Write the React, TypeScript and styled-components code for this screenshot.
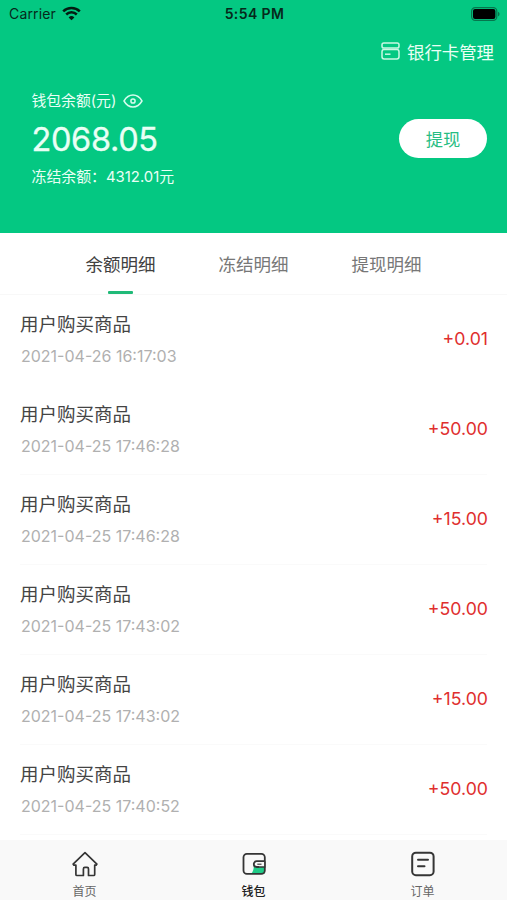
import React from 'react';
import styled, { createGlobalStyle } from 'styled-components';

const GlobalStyle = createGlobalStyle`
  * { box-sizing: border-box; }
  body { margin: 0; background: #fff; font-family: Inter, "Noto Sans CJK SC", sans-serif; }
  button { font-family: inherit; border: 0; padding: 0; background: none; }
`;

const Screen = styled.div`
  width: 507px;
  height: 900px;
  display: flex;
  flex-direction: column;
  overflow: hidden;
  background: #fff;
`;
const Hero = styled.header`
  height: 233px;
  flex: none;
  background: #04c882;
  color: #e9fff5;
`;
const StatusBar = styled.div`
  height: 27px;
  display: grid;
  grid-template-columns: 1fr auto 1fr;
  align-items: center;
  padding: 0 7px 0 9px;
  color: #06281b;
`;
const Carrier = styled.span`
  display: flex;
  align-items: center;
  gap: 6px;
  font-size: 14px;
  letter-spacing: 0.15px;
`;
const Clock = styled.span`
  font-size: 14px;
  font-weight: 600;
  letter-spacing: 0.4px;
`;
const BatteryIcon = styled.svg`
  justify-self: end;
`;
const CardLink = styled.div`
  height: 48px;
  display: flex;
  align-items: center;
  justify-content: flex-end;
  gap: 7px;
  padding-right: 13px;
  font-size: 17.4px;
`;
const Balance = styled.section`
  display: flex;
  align-items: center;
  justify-content: space-between;
  padding: 0 20px 0 31.5px;
  height: 128px;
`;
const BalanceLabel = styled.div`
  display: flex;
  align-items: center;
  gap: 7px;
  height: 24px;
  font-size: 14.8px;
  line-height: 22px;
`;
const Amount = styled.div`
  height: 52px;
  line-height: 54px;
  font-size: 32.5px;
  font-weight: 400;
  -webkit-text-stroke: 0.3px currentColor;
  letter-spacing: -0.35px;
`;
const Frozen = styled.div`
  height: 24px;
  line-height: 24px;
  font-size: 14.9px;
`;
const Withdraw = styled.button`
  width: 88px;
  height: 39px;
  margin-bottom: 1px;
  border-radius: 20px;
  background: #fff;
  color: #27bd83;
  font-size: 17.3px;
`;
const Tabs = styled.nav`
  height: 62px;
  flex: none;
  display: flex;
  justify-content: center;
  border-bottom: 1px solid #f8f8f8;
`;
const Tab = styled.button<{ $active?: boolean }>`
  width: 133px;
  height: 61px;
  display: flex;
  flex-direction: column;
  align-items: center;
  color: ${(p) => (p.$active ? '#404040' : '#777')};
  font-size: 17.5px;
  line-height: 52px;
  padding-top: 6px;
  &::after {
    content: '';
    width: 25px;
    height: 3px;
    border-radius: 1px;
    background: ${(p) => (p.$active ? '#20ba78' : 'transparent')};
  }
`;
const List = styled.main`
  flex: 1;
  padding: 0 20px;
`;
const Row = styled.article<{ $line: boolean }>`
  height: 90px;
  display: flex;
  align-items: center;
  justify-content: space-between;
  border-bottom: 1px solid ${(p) => (p.$line ? '#fafafa' : 'transparent')};
`;
const RowTitle = styled.div`
  height: 32px;
  line-height: 32px;
  font-size: 18.5px;
  color: #444;
`;
const RowTime = styled.div`
  height: 32px;
  line-height: 32px;
  padding-left: 1px;
  font-size: 16px;
  color: #b0b0b0;
`;
const RowAmount = styled.div`
  font-size: 17.7px;
  color: #e02e2e;
  padding-bottom: 2px;
  margin-right: -1px;
`;
const TabBar = styled.footer`
  height: 60px;
  flex: none;
  display: grid;
  grid-template-columns: repeat(3, 1fr);
  background: #f9f9f9;
`;
const NavItem = styled.div<{ $active?: boolean }>`
  display: flex;
  flex-direction: column;
  align-items: center;
  padding-top: 11px;
  gap: 4px;
  font-size: 12px;
  line-height: 21px;
  font-weight: ${(p) => (p.$active ? 500 : 400)};
  color: ${(p) => (p.$active ? '#222' : '#666')};
`;

const records = [
  { time: '2021-04-26 16:17:03', amount: '+0.01' },
  { time: '2021-04-25 17:46:28', amount: '+50.00' },
  { time: '2021-04-25 17:46:28', amount: '+15.00' },
  { time: '2021-04-25 17:43:02', amount: '+50.00' },
  { time: '2021-04-25 17:43:02', amount: '+15.00' },
  { time: '2021-04-25 17:40:52', amount: '+50.00' },
];

const Wifi = () => (
  <svg width="19" height="15" viewBox="0 0 19 15" fill="none" stroke="#031c12" strokeWidth="2.5">
    <path d="M1.2 5.4a11.8 11.8 0 0 1 16.6 0" />
    <path d="M4.2 8.5a7.5 7.5 0 0 1 10.6 0" />
    <path d="M9.5 14.3 6.6 11.4a4.1 4.1 0 0 1 5.8 0z" fill="#031c12" stroke="none" />
  </svg>
);
const Battery = () => (
  <BatteryIcon width="29" height="14" viewBox="0 0 29 14">
    <rect x=".6" y=".6" width="25.2" height="12.8" rx="3.6" fill="none" stroke="#06764d" strokeWidth="1.2" />
    <rect x="2" y="2" width="22.4" height="10" rx="2" fill="#000" />
    <path d="M27 4.7c2 .8 2 3.8 0 4.6z" fill="#06764d" />
  </BatteryIcon>
);
const CardIcon = () => (
  <svg width="19" height="18" viewBox="0 0 19 18" fill="none" stroke="#c9f8e4" strokeWidth="1.5">
    <rect x="1" y="1" width="17" height="5" rx="1.8" />
    <rect x="1" y="7.6" width="17" height="9.4" rx="2.2" />
    <path d="M4 12.2h5.5" />
  </svg>
);
const Eye = () => (
  <svg width="20" height="14" viewBox="0 0 20 14" fill="none" stroke="#d6fced" strokeWidth="1.5">
    <path d="M1 7c2.1-3.6 5.1-5.9 9-5.9S16.9 3.4 19 7c-2.1 3.6-5.1 5.9-9 5.9S3.1 10.6 1 7z" strokeLinejoin="round" />
    <circle cx="10" cy="7" r="2.1" />
  </svg>
);
const Home = () => (
  <svg width="26" height="26" viewBox="0 0 26 26" fill="none" stroke="#353535" strokeWidth="1.7" strokeLinejoin="round" strokeLinecap="round">
    <path d="M1.1 13.1 13 1.7l11.9 11.4-.8 1.1h-1.4v9.2c0 .7-.4 1.1-1.1 1.1h-5.1v-6.6c0-1-.5-1.6-1.4-1.6h-2.3c-.9 0-1.4.6-1.4 1.6v6.6H5c-.7 0-1.1-.4-1.1-1.1v-9.2H1.9z" />
  </svg>
);
const Wallet = () => (
  <svg width="26" height="26" viewBox="0 0 26 26" fill="none" stroke="#353535" strokeWidth="1.8">
    <path d="M12.5 13h11.3v9.8H10.200c2.200-2.500 3-5.500 2.300-9.800z" fill="#20cc88" stroke="none" />
    <rect x="2.500" y="2.800" width="21.300" height="20" rx="3.400" />
    <path d="M23.800 10.300h-8.100a2.900 2.900 0 0 0 0 5.800h8.100z" fill="#f9f9f9" stroke="none" />
    <path d="M23.800 10.200h-8.100a2.900 2.900 0 0 0 0 5.800h3" />
    <path d="M16.300 13.200h4.200" strokeWidth="1.100" />
    <path d="M18.700 16h5.100v-5.800" strokeWidth="1.400" />
  </svg>
);
const Orders = () => (
  <svg width="26" height="26" viewBox="0 0 26 26" fill="none" stroke="#353535" strokeWidth="2" strokeLinecap="round">
    <rect x="2.2" y="1.7" width="21.4" height="22.5" rx="3.7" />
    <path d="M8 8.7h10M8 15.300h6.500" />
  </svg>
);

export default function App() {
  return (
    <>
      <GlobalStyle />
      <Screen>
        <Hero>
          <StatusBar>
            <Carrier>Carrier <Wifi /></Carrier>
            <Clock>5:54 PM</Clock>
            <Battery />
          </StatusBar>
          <CardLink><CardIcon />银行卡管理</CardLink>
          <Balance>
            <div>
              <BalanceLabel>钱包余额(元) <Eye /></BalanceLabel>
              <Amount>2068.05</Amount>
              <Frozen>冻结余额：4312.01元</Frozen>
            </div>
            <Withdraw>提现</Withdraw>
          </Balance>
        </Hero>
        <Tabs>
          <Tab $active>余额明细</Tab>
          <Tab>冻结明细</Tab>
          <Tab>提现明细</Tab>
        </Tabs>
        <List>
          {records.map((record, index) => (
            <Row key={index} $line={index > 0}>
              <div>
                <RowTitle>用户购买商品</RowTitle>
                <RowTime>{record.time}</RowTime>
              </div>
              <RowAmount>{record.amount}</RowAmount>
            </Row>
          ))}
        </List>
        <TabBar>
          <NavItem><Home />首页</NavItem>
          <NavItem $active><Wallet />钱包</NavItem>
          <NavItem><Orders />订单</NavItem>
        </TabBar>
      </Screen>
    </>
  );
}
